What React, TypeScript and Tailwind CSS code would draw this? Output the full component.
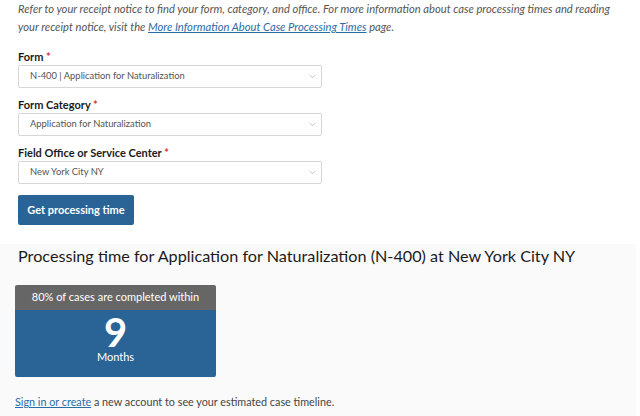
import { ChevronDown } from 'lucide-react';

const fields = [
  { label: 'Form', value: 'N-400 | Application for Naturalization' },
  { label: 'Form Category', value: 'Application for Naturalization' },
  { label: 'Field Office or Service Center', value: 'New York City NY' },
];

const App = () => {
  return (
    <div className="min-h-[416px] w-[640px] bg-white font-['Lato',sans-serif] text-[#1b1b1b]">
      <div className="px-[18px]">
        <p className="text-[11.2px] italic leading-[18px] text-[#555]">
          Refer to your receipt notice to find your form, category, and office. For more information about case processing times and reading your receipt notice, visit the{' '}
          <a className="text-[#2a6ca6] underline">More Information About Case Processing Times</a> page.
        </p>

        <form className="mt-[13px] w-[304px]">
          {fields.map((field) => (
            <div key={field.label} className="mb-[9px]">
              <label className="block text-[11px] font-bold leading-[16px]">
                {field.label} <span className="text-[#d83933]">*</span>
              </label>
              <div className="flex h-[23px] items-center justify-between rounded-[2px] border border-[#d6d6d6] bg-white pl-[11px] pr-[4px] text-[9.4px] text-[#555]">
                <span>{field.value}</span>
                <ChevronDown className="h-[9px] w-[9px] text-[#999]" strokeWidth={1.5} />
              </div>
            </div>
          ))}
          <button type="button" className="mt-[2px] h-[30px] w-[116px] rounded-[2px] bg-[#2a6496] text-[11px] font-bold text-white">
            Get processing time
          </button>
        </form>
      </div>

      <div className="mt-[19px] mr-[4px] bg-[#fafafa] pb-[8px]">
        <h2 className="px-[18px] text-[16.2px] leading-[24px] text-[#1b1b1b]">
          Processing time for Application for Naturalization (N-400) at New York City NY
        </h2>
        <div className="mx-[15px] mt-[17px] w-[201px] overflow-hidden rounded-[2px] text-center text-white">
          <div className="flex h-[25px] items-center justify-center bg-[#666] text-[11px]">80% of cases are completed within</div>
          <div className="flex h-[67px] flex-col items-center bg-[#2a6496] pt-[4px]">
            <span className="text-[40px] font-bold leading-[36px]">9</span>
            <span className="text-[11px] leading-[14px]">Months</span>
          </div>
        </div>
        <p className="mt-[17px] px-[15px] text-[10.8px] leading-[16px] text-[#444]">
          <a className="text-[#2a6ca6] underline">Sign in or create</a> a new account to see your estimated case timeline.
        </p>
      </div>
    </div>
  );
};

export default App;
